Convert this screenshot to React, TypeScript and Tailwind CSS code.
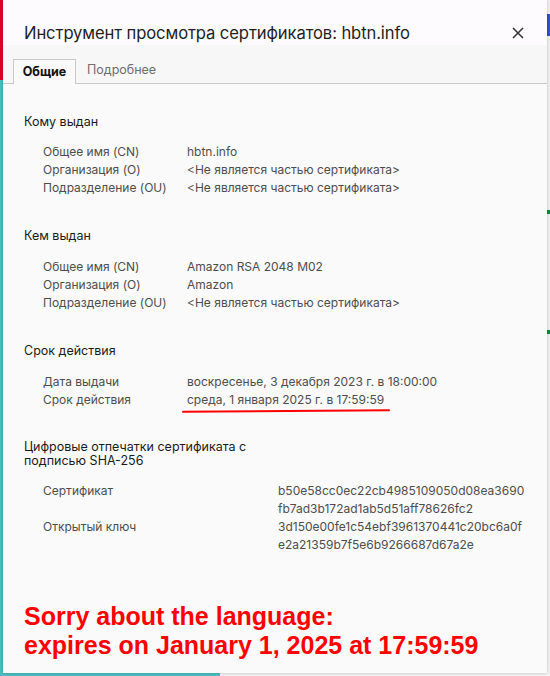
import React from "react";

const font = { fontFamily: 'Inter, "Noto Sans", "DejaVu Sans", sans-serif' };

function Row({ label, value }: { label: string; value: React.ReactNode }) {
  return (
    <div className="flex h-[18px] items-center text-[12px] text-[#4d4d4d]">
      <div className="w-[144px] shrink-0">{label}</div>
      <div>{value}</div>
    </div>
  );
}

export default function App() {
  return (
    <div className="relative w-[550px] h-[676px] overflow-hidden bg-[#f2f2f2]" style={font}>
      {/* background page hints */}
      <div className="absolute left-0 top-0 w-[3px] h-[80px] bg-[#e2002b]" />
      <div className="absolute left-0 top-[80px] w-[3px] h-[596px] bg-[#4bbec0]" />
      <div className="absolute left-0 top-[673px] w-[220px] h-[3px] bg-[#4bbec0]" />
      <div className="absolute right-0 top-[14px] w-[3px] h-[22px] bg-[#2d55c8]" />
      <div className="absolute right-0 top-[210px] w-[3px] h-[4px] bg-[#138a3a]" />
      <div className="absolute right-0 top-[330px] w-[3px] h-[4px] bg-[#138a3a]" />

      {/* dialog */}
      <div className="absolute left-[3px] top-0 w-[544px] h-[673px] bg-[#fafafa] shadow-[0_0_3px_rgba(0,0,0,0.25)] flex flex-col">
        <div className="h-[45px] bg-[#fdfbfd] flex items-center pl-[21px] pr-[20px] pt-[21px]">
          <div className="flex-1 text-[16.6px] text-[#1f1f1f] tracking-[-0.1px]">
            Инструмент просмотра сертификатов: hbtn.info
          </div>
          <svg width="12" height="12" viewBox="0 0 12 12" className="mr-[3px]">
            <path d="M1 1 L11 11 M11 1 L1 11" stroke="#333" strokeWidth="1.5" />
          </svg>
        </div>
        <div className="h-[39px] bg-[#f7f7f7] flex items-end border-b border-[#c8c8c8] pl-[10px]">
          <div className="h-[25px] w-[63px] border border-b-0 border-[#c8c8c8] bg-[#fafafa] -mb-px flex items-center justify-center text-[12.5px] font-bold text-[#111]">
            Общие
          </div>
          <div className="h-[25px] flex items-center pl-[11px] text-[12.5px] text-[#6e6e6e]">Подробнее</div>
        </div>

        <div className="pl-[21px] pt-[30px] flex flex-col">
          <div className="text-[12.5px] text-[#1a1a1a] h-[16px] flex items-center">Кому выдан</div>
          <div className="pl-[19px] pt-[13px] flex flex-col">
            <Row label="Общее имя (CN)" value="hbtn.info" />
            <Row label="Организация (O)" value="<Не является частью сертификата>" />
            <Row label="Подразделение (OU)" value="<Не является частью сертификата>" />
          </div>

          <div className="text-[12.5px] text-[#1a1a1a] h-[16px] flex items-center mt-[31px]">Кем выдан</div>
          <div className="pl-[19px] pt-[14px] flex flex-col">
            <Row label="Общее имя (CN)" value="Amazon RSA 2048 M02" />
            <Row label="Организация (O)" value="Amazon" />
            <Row label="Подразделение (OU)" value="<Не является частью сертификата>" />
          </div>

          <div className="text-[12.5px] text-[#1a1a1a] h-[16px] flex items-center mt-[31px]">Срок действия</div>
          <div className="pl-[19px] pt-[14px] flex flex-col">
            <Row label="Дата выдачи" value="воскресенье, 3 декабря 2023 г. в 18:00:00" />
            <Row
              label="Срок действия"
              value={
                <span className="relative">
                  среда, 1 января 2025 г. в 17:59:59
                  <span className="absolute left-[-5px] top-[18px] w-[208px] h-[2px] bg-[#ff0000] rounded-full -rotate-[0.4deg]" />
                </span>
              }
            />
          </div>

          <div className="text-[12.5px] text-[#1a1a1a] leading-[13.5px] mt-[31px]">
            Цифровые отпечатки сертификата с<br />подписью SHA-256
          </div>
          <div className="pl-[19px] pt-[15px] flex flex-col text-[12px] text-[#4d4d4d]">
            <div className="flex">
              <div className="w-[235px] shrink-0 leading-[18px]">Сертификат</div>
              <div className="leading-[18px]">
                b50e58cc0ec22cb4985109050d08ea3690
                <br />
                fb7ad3b172ad1ab5d51aff78626fc2
              </div>
            </div>
            <div className="flex">
              <div className="w-[235px] shrink-0 leading-[18px]">Открытый ключ</div>
              <div className="leading-[18px]">
                3d150e00fe1c54ebf3961370441c20bc6a0f
                <br />
                e2a21359b7f5e6b9266687d67a2e
              </div>
            </div>
          </div>

          <div
            className="mt-[48px] text-[25px] font-bold text-[#ff0000] leading-[29px]"
            style={{ fontFamily: '"Liberation Sans", Arial, sans-serif' }}
          >
            Sorry about the language:
            <br />
            expires on January 1, 2025 at 17:59:59
          </div>
        </div>
      </div>
    </div>
  );
}
